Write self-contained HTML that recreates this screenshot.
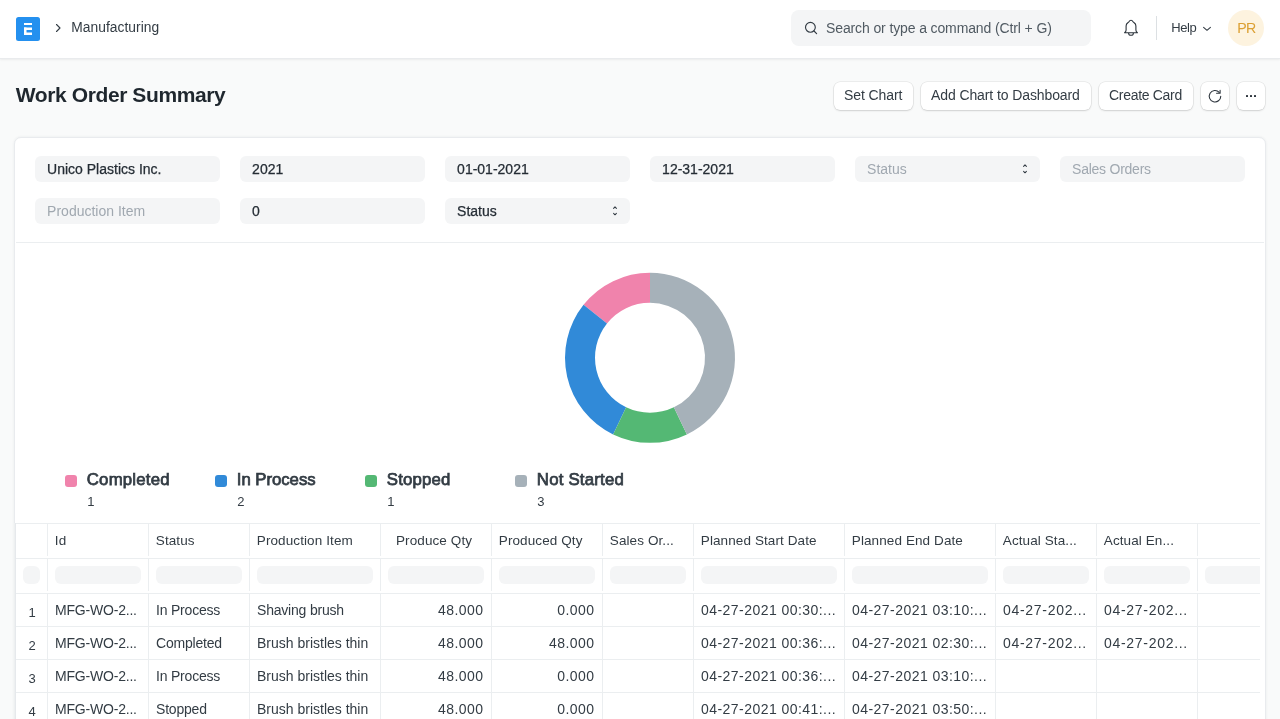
<!DOCTYPE html>
<html><head><meta charset="utf-8"><title>Work Order Summary</title><style>
*{margin:0;padding:0;box-sizing:border-box}
html,body{width:1280px;height:719px;overflow:hidden;background:#f9fafa;font-family:"Liberation Sans", sans-serif;}
.t{position:absolute;white-space:nowrap;}
.b{position:absolute;}
svg{position:absolute;overflow:visible}
</style></head>
<body><div id="root" style="position:absolute;left:0;top:0;width:1280px;height:719px;overflow:hidden;background:#f9fafa;will-change:transform">
<div class="b" style="left:0px;top:0px;width:1280px;height:58px;background:#fff;box-shadow:0 1px 2px rgba(0,0,0,0.06);border-bottom:1px solid #e9ebed;height:59px;"></div>
<svg style="left:16px;top:17px" width="24" height="24" viewBox="0 0 24 24"><rect x="0" y="0" width="24" height="24" rx="2.5" fill="#2490ef"/><rect x="8" y="6" width="8" height="2" fill="#fff"/><rect x="8" y="10.5" width="8" height="2.5" fill="#fff"/><rect x="8" y="10.5" width="2.5" height="7.5" fill="#fff"/><rect x="8" y="15.5" width="8" height="2.5" fill="#fff"/></svg>
<svg style="left:54px;top:22px" width="12" height="12" viewBox="0 0 12 12"><path d="M2.5 2.5 L6 6 L2.5 9.5" fill="none" stroke="#333c44" stroke-width="1.1" stroke-linecap="round" stroke-linejoin="round"/></svg>
<div class="t" id="k_manu" style="left:71.20px;top:18.72px;font-size:13.8px;line-height:17px;color:#333c44;letter-spacing:0.05px;">Manufacturing</div>
<div class="b" style="left:791px;top:10px;width:300px;height:36px;background:#f4f5f6;border-radius:8px;"></div>
<svg style="left:804px;top:21px" width="14" height="14" viewBox="0 0 14 14"><circle cx="6.4" cy="6.3" r="4.9" fill="none" stroke="#333c44" stroke-width="1.15"/><path d="M10 10 L12.6 12.6" stroke="#333c44" stroke-width="1.15" stroke-linecap="round"/></svg>
<div class="t" id="k_search" style="left:826.00px;top:19.35px;font-size:14px;line-height:18px;color:#505a62;letter-spacing:-0.12px;">Search or type a command (Ctrl + G)</div>
<svg style="left:1118px;top:14px" width="26" height="26" viewBox="0 0 26 26"><path d="M6.6 18.8 C7.6 18 8.1 17 8.1 16 V12 C8.1 10.5 8.7 9.6 9.8 8.8 L11.1 7.6 C11.5 6.8 12.1 6.3 13 6.3 C13.9 6.3 14.5 6.8 14.9 7.6 L16.2 8.8 C17.3 9.6 17.9 10.5 17.9 12 V16 C17.9 17 18.4 18 19.4 18.8 Z" fill="none" stroke="#2b333b" stroke-width="1.1" stroke-linejoin="round"/><path d="M10.6 18.9 C10.6 20.4 11.6 21.3 13 21.3 C14.4 21.3 15.4 20.4 15.4 18.9" fill="none" stroke="#2b333b" stroke-width="1.1"/></svg>
<div class="b" style="left:1156px;top:16px;width:1px;height:24px;background:#dce0e3;"></div>
<div class="t" id="k_help" style="left:1171.30px;top:19.89px;font-size:13px;line-height:16px;color:#333c44;letter-spacing:-0.4px;">Help</div>
<svg style="left:1201px;top:24px" width="12" height="10" viewBox="0 0 12 10"><path d="M2.6 3.4 L6 6.3 L9.4 3.4" fill="none" stroke="#333c44" stroke-width="1.1" stroke-linecap="round" stroke-linejoin="round"/></svg>
<div class="b" style="left:1228px;top:10px;width:36px;height:36px;background:#fdf3df;border-radius:18px;"></div>
<div class="t" id="k_pr" style="left:1228.30px;width:36px;text-align:center;top:19.08px;font-size:14.2px;line-height:18px;color:#dca032;letter-spacing:-0.75px;">PR</div>
<div class="t" id="k_title" style="left:15.80px;top:82.12px;font-size:21px;line-height:26px;color:#1f272e;font-weight:700;letter-spacing:-0.4px;">Work Order Summary</div>
<div class="b" style="left:834px;top:82px;width:79px;height:28px;background:#fff;border-radius:6px;box-shadow:0 0 0 0.5px rgba(0,0,0,0.10),0 1px 2px rgba(0,0,0,0.12);"></div>
<div class="t" id="k_btn0" style="left:844.00px;top:85.85px;font-size:14px;line-height:18px;color:#333c44;letter-spacing:-0.1px;">Set Chart</div>
<div class="b" style="left:921px;top:82px;width:170px;height:28px;background:#fff;border-radius:6px;box-shadow:0 0 0 0.5px rgba(0,0,0,0.10),0 1px 2px rgba(0,0,0,0.12);"></div>
<div class="t" id="k_btn1" style="left:931.00px;top:85.85px;font-size:14px;line-height:18px;color:#333c44;letter-spacing:-0.1px;">Add Chart to Dashboard</div>
<div class="b" style="left:1099px;top:82px;width:94px;height:28px;background:#fff;border-radius:6px;box-shadow:0 0 0 0.5px rgba(0,0,0,0.10),0 1px 2px rgba(0,0,0,0.12);"></div>
<div class="t" id="k_btn2" style="left:1109.00px;top:85.85px;font-size:14px;line-height:18px;color:#333c44;letter-spacing:-0.3px;">Create Card</div>
<div class="b" style="left:1201px;top:82px;width:28px;height:28px;background:#fff;border-radius:6px;box-shadow:0 0 0 0.5px rgba(0,0,0,0.10),0 1px 2px rgba(0,0,0,0.12);"></div>
<svg style="left:0;top:0" width="1280" height="200" viewBox="0 0 1280 200"><path d="M1219.2 92.3 A5.75 5.75 0 1 0 1220.75 96.2" fill="none" stroke="#2b333b" stroke-width="1.1" stroke-linecap="round"/><path d="M1220.1 90.4 V93.3 H1216.6" fill="none" stroke="#2b333b" stroke-width="1.1" stroke-linecap="round" stroke-linejoin="round"/></svg>
<div class="b" style="left:1237px;top:82px;width:28px;height:28px;background:#fff;border-radius:6px;box-shadow:0 0 0 0.5px rgba(0,0,0,0.10),0 1px 2px rgba(0,0,0,0.12);"></div>
<div class="b" style="left:1246px;top:95px;width:2px;height:2px;background:#2b333b;border-radius:0.5px;"></div>
<div class="b" style="left:1250px;top:95px;width:2px;height:2px;background:#2b333b;border-radius:0.5px;"></div>
<div class="b" style="left:1254px;top:95px;width:2px;height:2px;background:#2b333b;border-radius:0.5px;"></div>
<div class="b" style="left:14px;top:137px;width:1252px;height:700px;background:#fff;border-radius:7px;border:1px solid #e9ebee;box-shadow:0 0 3px rgba(25,39,52,0.07);"></div>
<div class="b" style="left:35px;top:156px;width:185px;height:26px;background:#f4f5f6;border-radius:6px;"></div>
<div class="t" id="k_f0" style="left:47.10px;top:160.25px;font-size:14px;line-height:18px;color:#252d35;-webkit-text-stroke:0.25px currentColor;">Unico Plastics Inc.</div>
<div class="b" style="left:240px;top:156px;width:185px;height:26px;background:#f4f5f6;border-radius:6px;"></div>
<div class="t" id="k_f1" style="left:252.10px;top:160.25px;font-size:14px;line-height:18px;color:#252d35;-webkit-text-stroke:0.25px currentColor;">2021</div>
<div class="b" style="left:445px;top:156px;width:185px;height:26px;background:#f4f5f6;border-radius:6px;"></div>
<div class="t" id="k_f2" style="left:457.10px;top:160.25px;font-size:14px;line-height:18px;color:#252d35;-webkit-text-stroke:0.25px currentColor;">01-01-2021</div>
<div class="b" style="left:650px;top:156px;width:185px;height:26px;background:#f4f5f6;border-radius:6px;"></div>
<div class="t" id="k_f3" style="left:662.10px;top:160.25px;font-size:14px;line-height:18px;color:#252d35;-webkit-text-stroke:0.25px currentColor;">12-31-2021</div>
<div class="b" style="left:855px;top:156px;width:185px;height:26px;background:#f4f5f6;border-radius:6px;"></div>
<div class="t" id="k_f4" style="left:867.10px;top:159.75px;font-size:14px;line-height:18px;color:#a0a8b0;">Status</div>
<svg style="left:1021.5px;top:164px" width="6" height="10" viewBox="0 0 6 10"><path d="M1.6 2.4 L3 0.9 L4.4 2.4 M1.6 7.3 L3 8.8 L4.4 7.3" fill="none" stroke="#333c44" stroke-width="1.05" stroke-linecap="round" stroke-linejoin="round"/></svg>
<div class="b" style="left:1060px;top:156px;width:185px;height:26px;background:#f4f5f6;border-radius:6px;"></div>
<div class="t" id="k_f5" style="left:1072.10px;top:160.25px;font-size:14px;line-height:18px;color:#a0a8b0;letter-spacing:-0.25px;">Sales Orders</div>
<div class="b" style="left:35px;top:198px;width:185px;height:26px;background:#f4f5f6;border-radius:6px;"></div>
<div class="t" id="k_g0" style="left:47.10px;top:202.45px;font-size:14px;line-height:18px;color:#a0a8b0;">Production Item</div>
<div class="b" style="left:240px;top:198px;width:185px;height:26px;background:#f4f5f6;border-radius:6px;"></div>
<div class="t" id="k_g1" style="left:252.10px;top:202.45px;font-size:14px;line-height:18px;color:#252d35;-webkit-text-stroke:0.25px currentColor;">0</div>
<div class="b" style="left:445px;top:198px;width:185px;height:26px;background:#f4f5f6;border-radius:6px;"></div>
<div class="t" id="k_g2" style="left:457.10px;top:202.45px;font-size:14px;line-height:18px;color:#252d35;-webkit-text-stroke:0.25px currentColor;">Status</div>
<svg style="left:611.5px;top:206px" width="6" height="10" viewBox="0 0 6 10"><path d="M1.6 2.4 L3 0.9 L4.4 2.4 M1.6 7.3 L3 8.8 L4.4 7.3" fill="none" stroke="#333c44" stroke-width="1.05" stroke-linecap="round" stroke-linejoin="round"/></svg>
<div class="b" style="left:16px;top:242px;width:1248px;height:1px;background:#ebeef0;"></div>
<svg style="left:0;top:0" width="1280" height="719" viewBox="0 0 1280 719"><path d="M650.00 272.80 A85 85 0 0 0 583.54 304.80 L607.00 323.51 A55 55 0 0 1 650.00 302.80 Z" fill="#f083ac"/><path d="M583.54 304.80 A85 85 0 0 0 613.12 434.38 L626.14 407.35 A55 55 0 0 1 607.00 323.51 Z" fill="#318ad8"/><path d="M613.12 434.38 A85 85 0 0 0 686.88 434.38 L673.86 407.35 A55 55 0 0 1 626.14 407.35 Z" fill="#54b874"/><path d="M686.88 434.38 A85 85 0 0 0 650.00 272.80 L650.00 302.80 A55 55 0 0 1 673.86 407.35 Z" fill="#a6b1b9"/></svg>
<div class="b" style="left:65px;top:475px;width:12px;height:12px;background:#f083ac;border-radius:3px;"></div>
<div class="t" id="k_lg0" style="left:86.80px;top:469.08px;font-size:16.8px;line-height:21px;color:#333c44;letter-spacing:0.2px;-webkit-text-stroke:0.75px currentColor;">Completed</div>
<div class="t" id="k_lv0" style="left:87.30px;top:493.89px;font-size:13px;line-height:16px;color:#333c44;">1</div>
<div class="b" style="left:215px;top:475px;width:12px;height:12px;background:#318ad8;border-radius:3px;"></div>
<div class="t" id="k_lg1" style="left:236.80px;top:469.08px;font-size:16.8px;line-height:21px;color:#333c44;letter-spacing:-0.05px;-webkit-text-stroke:0.75px currentColor;">In Process</div>
<div class="t" id="k_lv1" style="left:237.30px;top:493.89px;font-size:13px;line-height:16px;color:#333c44;">2</div>
<div class="b" style="left:365px;top:475px;width:12px;height:12px;background:#54b874;border-radius:3px;"></div>
<div class="t" id="k_lg2" style="left:386.80px;top:469.08px;font-size:16.8px;line-height:21px;color:#333c44;letter-spacing:0.15px;-webkit-text-stroke:0.75px currentColor;">Stopped</div>
<div class="t" id="k_lv2" style="left:387.30px;top:493.89px;font-size:13px;line-height:16px;color:#333c44;">1</div>
<div class="b" style="left:515px;top:475px;width:12px;height:12px;background:#a6b1b9;border-radius:3px;"></div>
<div class="t" id="k_lg3" style="left:536.80px;top:469.08px;font-size:16.8px;line-height:21px;color:#333c44;letter-spacing:0.22px;-webkit-text-stroke:0.75px currentColor;">Not Started</div>
<div class="t" id="k_lv3" style="left:537.30px;top:493.89px;font-size:13px;line-height:16px;color:#333c44;">3</div>
<div class="b" style="left:15px;top:523px;width:1245px;height:1px;background:#ebeef0;"></div>
<div class="b" style="left:15px;top:558px;width:1245px;height:1px;background:#ebeef0;"></div>
<div class="b" style="left:15px;top:593px;width:1245px;height:1px;background:#ebeef0;"></div>
<div class="b" style="left:15px;top:626px;width:1245px;height:1px;background:#ebeef0;"></div>
<div class="b" style="left:15px;top:659px;width:1245px;height:1px;background:#ebeef0;"></div>
<div class="b" style="left:15px;top:692px;width:1245px;height:1px;background:#ebeef0;"></div>
<div class="b" style="left:47px;top:523px;width:1px;height:33px;background:#ebeef0;"></div>
<div class="b" style="left:47px;top:558px;width:1px;height:33px;background:#ebeef0;"></div>
<div class="b" style="left:47px;top:593px;width:1px;height:130px;background:#ebeef0;"></div>
<div class="b" style="left:148px;top:523px;width:1px;height:33px;background:#ebeef0;"></div>
<div class="b" style="left:148px;top:558px;width:1px;height:33px;background:#ebeef0;"></div>
<div class="b" style="left:148px;top:593px;width:1px;height:130px;background:#ebeef0;"></div>
<div class="b" style="left:249px;top:523px;width:1px;height:33px;background:#ebeef0;"></div>
<div class="b" style="left:249px;top:558px;width:1px;height:33px;background:#ebeef0;"></div>
<div class="b" style="left:249px;top:593px;width:1px;height:130px;background:#ebeef0;"></div>
<div class="b" style="left:380px;top:523px;width:1px;height:33px;background:#ebeef0;"></div>
<div class="b" style="left:380px;top:558px;width:1px;height:33px;background:#ebeef0;"></div>
<div class="b" style="left:380px;top:593px;width:1px;height:130px;background:#ebeef0;"></div>
<div class="b" style="left:491px;top:523px;width:1px;height:33px;background:#ebeef0;"></div>
<div class="b" style="left:491px;top:558px;width:1px;height:33px;background:#ebeef0;"></div>
<div class="b" style="left:491px;top:593px;width:1px;height:130px;background:#ebeef0;"></div>
<div class="b" style="left:602px;top:523px;width:1px;height:33px;background:#ebeef0;"></div>
<div class="b" style="left:602px;top:558px;width:1px;height:33px;background:#ebeef0;"></div>
<div class="b" style="left:602px;top:593px;width:1px;height:130px;background:#ebeef0;"></div>
<div class="b" style="left:693px;top:523px;width:1px;height:33px;background:#ebeef0;"></div>
<div class="b" style="left:693px;top:558px;width:1px;height:33px;background:#ebeef0;"></div>
<div class="b" style="left:693px;top:593px;width:1px;height:130px;background:#ebeef0;"></div>
<div class="b" style="left:844px;top:523px;width:1px;height:33px;background:#ebeef0;"></div>
<div class="b" style="left:844px;top:558px;width:1px;height:33px;background:#ebeef0;"></div>
<div class="b" style="left:844px;top:593px;width:1px;height:130px;background:#ebeef0;"></div>
<div class="b" style="left:995px;top:523px;width:1px;height:33px;background:#ebeef0;"></div>
<div class="b" style="left:995px;top:558px;width:1px;height:33px;background:#ebeef0;"></div>
<div class="b" style="left:995px;top:593px;width:1px;height:130px;background:#ebeef0;"></div>
<div class="b" style="left:1096px;top:523px;width:1px;height:33px;background:#ebeef0;"></div>
<div class="b" style="left:1096px;top:558px;width:1px;height:33px;background:#ebeef0;"></div>
<div class="b" style="left:1096px;top:593px;width:1px;height:130px;background:#ebeef0;"></div>
<div class="b" style="left:1197px;top:523px;width:1px;height:33px;background:#ebeef0;"></div>
<div class="b" style="left:1197px;top:558px;width:1px;height:33px;background:#ebeef0;"></div>
<div class="b" style="left:1197px;top:593px;width:1px;height:130px;background:#ebeef0;"></div>
<div class="b" style="left:14px;top:523px;width:1px;height:196px;background:#eef0f1;"></div>
<div class="b" style="left:15px;top:523px;width:1px;height:196px;background:#e6e9ec;"></div>
<div class="t" id="k_h1" style="left:54.80px;top:531.82px;font-size:13.5px;line-height:17px;color:#333c44;letter-spacing:0.1px;">Id</div>
<div class="t" id="k_h2" style="left:155.80px;top:531.82px;font-size:13.5px;line-height:17px;color:#333c44;letter-spacing:0.1px;">Status</div>
<div class="t" id="k_h3" style="left:256.80px;top:531.82px;font-size:13.5px;line-height:17px;color:#333c44;letter-spacing:0.1px;">Production Item</div>
<div class="t" id="k_h4" style="left:396.00px;top:531.82px;font-size:13.5px;line-height:17px;color:#333c44;letter-spacing:0.1px;">Produce Qty</div>
<div class="t" id="k_h5" style="left:498.80px;top:531.82px;font-size:13.5px;line-height:17px;color:#333c44;letter-spacing:0.1px;">Produced Qty</div>
<div class="t" id="k_h6" style="left:609.80px;top:531.82px;font-size:13.5px;line-height:17px;color:#333c44;letter-spacing:0.1px;">Sales Or...</div>
<div class="t" id="k_h7" style="left:700.80px;top:531.82px;font-size:13.5px;line-height:17px;color:#333c44;letter-spacing:0.1px;">Planned Start Date</div>
<div class="t" id="k_h8" style="left:851.80px;top:531.82px;font-size:13.5px;line-height:17px;color:#333c44;letter-spacing:0.1px;">Planned End Date</div>
<div class="t" id="k_h9" style="left:1002.80px;top:531.82px;font-size:13.5px;line-height:17px;color:#333c44;letter-spacing:0.1px;">Actual Sta...</div>
<div class="t" id="k_h10" style="left:1103.80px;top:531.82px;font-size:13.5px;line-height:17px;color:#333c44;letter-spacing:0.1px;">Actual En...</div>
<div class="b" style="left:23px;top:566px;width:17px;height:18px;background:#f4f5f6;border-radius:6px;"></div>
<div class="b" style="left:55px;top:566px;width:86px;height:18px;background:#f4f5f6;border-radius:6px;"></div>
<div class="b" style="left:156px;top:566px;width:86px;height:18px;background:#f4f5f6;border-radius:6px;"></div>
<div class="b" style="left:257px;top:566px;width:116px;height:18px;background:#f4f5f6;border-radius:6px;"></div>
<div class="b" style="left:388px;top:566px;width:96px;height:18px;background:#f4f5f6;border-radius:6px;"></div>
<div class="b" style="left:499px;top:566px;width:96px;height:18px;background:#f4f5f6;border-radius:6px;"></div>
<div class="b" style="left:610px;top:566px;width:76px;height:18px;background:#f4f5f6;border-radius:6px;"></div>
<div class="b" style="left:701px;top:566px;width:136px;height:18px;background:#f4f5f6;border-radius:6px;"></div>
<div class="b" style="left:852px;top:566px;width:136px;height:18px;background:#f4f5f6;border-radius:6px;"></div>
<div class="b" style="left:1003px;top:566px;width:86px;height:18px;background:#f4f5f6;border-radius:6px;"></div>
<div class="b" style="left:1104px;top:566px;width:86px;height:18px;background:#f4f5f6;border-radius:6px;"></div>
<div class="b" style="left:1205px;top:566px;width:60px;height:18px;background:#f4f5f6;border-radius:6px;"></div>
<div class="t" id="k_d0_0" style="left:22.00px;width:20px;text-align:center;top:604.89px;font-size:13px;line-height:16px;color:#333c44;">1</div>
<div class="t" id="k_d0_1" style="left:55.00px;top:601.15px;font-size:14px;line-height:18px;color:#333c44;letter-spacing:-0.2px;">MFG-WO-2...</div>
<div class="t" id="k_d0_2" style="left:156.00px;top:601.15px;font-size:14px;line-height:18px;color:#333c44;letter-spacing:-0.2px;">In Process</div>
<div class="t" id="k_d0_3" style="left:257.00px;top:601.15px;font-size:14px;line-height:18px;color:#333c44;letter-spacing:-0.2px;">Shaving brush</div>
<div class="t" id="k_d0_4" style="right:796.50px;text-align:right;top:601.15px;font-size:14px;line-height:18px;color:#333c44;letter-spacing:0.45px;">48.000</div>
<div class="t" id="k_d0_5" style="right:685.50px;text-align:right;top:601.15px;font-size:14px;line-height:18px;color:#333c44;letter-spacing:0.45px;">0.000</div>
<div class="t" id="k_d0_7" style="left:701.00px;top:601.15px;font-size:14px;line-height:18px;color:#333c44;letter-spacing:0.45px;">04-27-2021 00:30:...</div>
<div class="t" id="k_d0_8" style="left:852.00px;top:601.15px;font-size:14px;line-height:18px;color:#333c44;letter-spacing:0.45px;">04-27-2021 03:10:...</div>
<div class="t" id="k_d0_9" style="left:1003.00px;top:601.15px;font-size:14px;line-height:18px;color:#333c44;letter-spacing:0.7px;">04-27-202...</div>
<div class="t" id="k_d0_10" style="left:1104.00px;top:601.15px;font-size:14px;line-height:18px;color:#333c44;letter-spacing:0.7px;">04-27-202...</div>
<div class="t" id="k_d1_0" style="left:22.00px;width:20px;text-align:center;top:637.89px;font-size:13px;line-height:16px;color:#333c44;">2</div>
<div class="t" id="k_d1_1" style="left:55.00px;top:634.15px;font-size:14px;line-height:18px;color:#333c44;letter-spacing:-0.2px;">MFG-WO-2...</div>
<div class="t" id="k_d1_2" style="left:156.00px;top:634.15px;font-size:14px;line-height:18px;color:#333c44;letter-spacing:-0.2px;">Completed</div>
<div class="t" id="k_d1_3" style="left:257.00px;top:634.15px;font-size:14px;line-height:18px;color:#333c44;">Brush bristles thin</div>
<div class="t" id="k_d1_4" style="right:796.50px;text-align:right;top:634.15px;font-size:14px;line-height:18px;color:#333c44;letter-spacing:0.45px;">48.000</div>
<div class="t" id="k_d1_5" style="right:685.50px;text-align:right;top:634.15px;font-size:14px;line-height:18px;color:#333c44;letter-spacing:0.45px;">48.000</div>
<div class="t" id="k_d1_7" style="left:701.00px;top:634.15px;font-size:14px;line-height:18px;color:#333c44;letter-spacing:0.45px;">04-27-2021 00:36:...</div>
<div class="t" id="k_d1_8" style="left:852.00px;top:634.15px;font-size:14px;line-height:18px;color:#333c44;letter-spacing:0.45px;">04-27-2021 02:30:...</div>
<div class="t" id="k_d1_9" style="left:1003.00px;top:634.15px;font-size:14px;line-height:18px;color:#333c44;letter-spacing:0.7px;">04-27-202...</div>
<div class="t" id="k_d1_10" style="left:1104.00px;top:634.15px;font-size:14px;line-height:18px;color:#333c44;letter-spacing:0.7px;">04-27-202...</div>
<div class="t" id="k_d2_0" style="left:22.00px;width:20px;text-align:center;top:670.89px;font-size:13px;line-height:16px;color:#333c44;">3</div>
<div class="t" id="k_d2_1" style="left:55.00px;top:667.15px;font-size:14px;line-height:18px;color:#333c44;letter-spacing:-0.2px;">MFG-WO-2...</div>
<div class="t" id="k_d2_2" style="left:156.00px;top:667.15px;font-size:14px;line-height:18px;color:#333c44;letter-spacing:-0.2px;">In Process</div>
<div class="t" id="k_d2_3" style="left:257.00px;top:667.15px;font-size:14px;line-height:18px;color:#333c44;">Brush bristles thin</div>
<div class="t" id="k_d2_4" style="right:796.50px;text-align:right;top:667.15px;font-size:14px;line-height:18px;color:#333c44;letter-spacing:0.45px;">48.000</div>
<div class="t" id="k_d2_5" style="right:685.50px;text-align:right;top:667.15px;font-size:14px;line-height:18px;color:#333c44;letter-spacing:0.45px;">0.000</div>
<div class="t" id="k_d2_7" style="left:701.00px;top:667.15px;font-size:14px;line-height:18px;color:#333c44;letter-spacing:0.45px;">04-27-2021 00:36:...</div>
<div class="t" id="k_d2_8" style="left:852.00px;top:667.15px;font-size:14px;line-height:18px;color:#333c44;letter-spacing:0.45px;">04-27-2021 03:10:...</div>
<div class="t" id="k_d3_0" style="left:22.00px;width:20px;text-align:center;top:703.89px;font-size:13px;line-height:16px;color:#333c44;">4</div>
<div class="t" id="k_d3_1" style="left:55.00px;top:700.15px;font-size:14px;line-height:18px;color:#333c44;letter-spacing:-0.2px;">MFG-WO-2...</div>
<div class="t" id="k_d3_2" style="left:156.00px;top:700.15px;font-size:14px;line-height:18px;color:#333c44;letter-spacing:-0.2px;">Stopped</div>
<div class="t" id="k_d3_3" style="left:257.00px;top:700.15px;font-size:14px;line-height:18px;color:#333c44;">Brush bristles thin</div>
<div class="t" id="k_d3_4" style="right:796.50px;text-align:right;top:700.15px;font-size:14px;line-height:18px;color:#333c44;letter-spacing:0.45px;">48.000</div>
<div class="t" id="k_d3_5" style="right:685.50px;text-align:right;top:700.15px;font-size:14px;line-height:18px;color:#333c44;letter-spacing:0.45px;">0.000</div>
<div class="t" id="k_d3_7" style="left:701.00px;top:700.15px;font-size:14px;line-height:18px;color:#333c44;letter-spacing:0.45px;">04-27-2021 00:41:...</div>
<div class="t" id="k_d3_8" style="left:852.00px;top:700.15px;font-size:14px;line-height:18px;color:#333c44;letter-spacing:0.45px;">04-27-2021 03:50:...</div>
<div class="b" style="left:1260px;top:243px;width:5px;height:480px;background:#fff;"></div>

</div></body></html>
